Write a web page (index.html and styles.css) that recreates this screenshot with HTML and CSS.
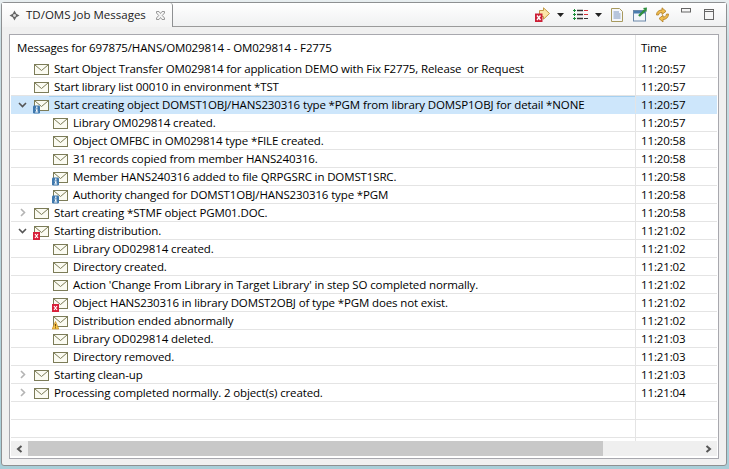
FILE: index.html
```html
<!DOCTYPE html>
<html lang="en">
<head>
<meta charset="utf-8">
<title>TD/OMS Job Messages</title>
<link rel="stylesheet" href="styles.css">
</head>
<body>
<svg class="defs" width="0" height="0" aria-hidden="true">
  <symbol id="env" viewBox="0 0 15 11">
    <rect x="0.5" y="0.5" width="14" height="10" fill="#fbfbf2" stroke="#7c7c58"/>
    <path d="M1 1 L7.5 6.5 L14 1" fill="none" stroke="#7c7c58"/>
  </symbol>
  <symbol id="info" viewBox="0 0 7 9">
    <rect x="0" y="0.5" width="7" height="8" rx="1.2" fill="#3f78ad"/>
    <rect x="3" y="1.5" width="1.5" height="1.3" fill="#fff"/>
    <rect x="2.5" y="3.5" width="2" height="1" fill="#fff"/>
    <rect x="3" y="4.5" width="1.5" height="2" fill="#fff"/>
    <rect x="2.2" y="6.5" width="3" height="1" fill="#fff"/>
  </symbol>
  <symbol id="err" viewBox="0 0 7 9">
    <rect y="1" width="7" height="8" fill="#d8203a"/>
    <path d="M2 3 L5 7 M5 3 L2 7" stroke="#fff" stroke-width="1.2"/>
  </symbol>
  <symbol id="warn" viewBox="0 0 7 9">
    <path d="M3.5 0.5 L6.8 8 H0.2 Z" fill="#f6c84c" stroke="#c98a1c" stroke-width="0.7"/>
    <path d="M3.5 3 V5.5 M3.5 6.3 V7.3" stroke="#7a4a10"/>
  </symbol>
  <symbol id="open" viewBox="0 0 9 6">
    <path d="M1 1 L4.5 4.5 L8 1" fill="none" stroke="#555" stroke-width="1.6"/>
  </symbol>
  <symbol id="closed" viewBox="0 0 6 9">
    <path d="M1 1 L4.5 4.5 L1 8" fill="none" stroke="#b4b4b4" stroke-width="1.6"/>
  </symbol>
</svg>

<main class="window">
  <header class="tabbar">
    <div class="tab">
      <svg class="tab-icon" width="11" height="11" viewBox="0 0 12 12"><path d="M6 0.5 L8 4 L11.5 6 L8 8 L6 11.5 L4 8 L0.5 6 L4 4Z" fill="#666"/><circle cx="6" cy="6" r="1.6" fill="#ddd"/></svg>
      <span class="tab-title">TD/OMS Job Messages</span>
      <svg class="tab-close" width="11" height="11" viewBox="0 0 11 11"><path d="M1.5 1.5 L4 1.5 L5.5 3.5 L7 1.5 L9.5 1.5 L9.5 3 L7.3 5.5 L9.5 8 L9.5 9.5 L7 9.5 L5.5 7.5 L4 9.5 L1.5 9.5 L1.5 8 L3.7 5.5 L1.5 3Z" fill="#f4f4f4" stroke="#8e8e8e" stroke-width="0.9"/></svg>
    </div>
    <div class="toolbar">
      <svg class="tool t-run" width="16" height="16" viewBox="0 0 16 16"><path d="M5.5 3.5 H9.5 V0.8 L15.5 6.5 L9.5 12.2 V9.5 H5.5Z" fill="#fbe5a8" stroke="#c29a45"/><rect x="1" y="6.5" width="7.5" height="8.5" fill="#cc1f36"/><path d="M3 8.5 L6.5 13 M6.5 8.5 L3 13" stroke="#fff" stroke-width="1.3"/></svg>
      <svg class="tool t-arrow" width="7" height="4" viewBox="0 0 7 4"><path d="M0 0H7L3.5 4Z" fill="#222"/></svg>
      <svg class="tool t-list" width="15" height="13" viewBox="0 0 15 13"><path d="M0 2.5H3M1.5 1V4M0 6.5H3M1.5 5V8M0 10.5H3M1.5 9V12" stroke="#1b8e3a"/><path d="M4 2.5H10M4 6.5H10M4 10.5H10" stroke="#333" stroke-width="1.6"/><path d="M11 2.5H15M11 6.5H15" stroke="#d8303a"/><path d="M11 10.5H15" stroke="#333"/></svg>
      <svg class="tool t-arrow2" width="7" height="4" viewBox="0 0 7 4"><path d="M0 0H7L3.5 4Z" fill="#222"/></svg>
      <svg class="tool t-doc" width="12" height="14" viewBox="0 0 12 14"><path d="M0.5 0.5H8.5L11.5 3.5V13.5H0.5Z" fill="#f5f7fb" stroke="#a89a5e"/><path d="M2.5 4H8M2.5 6H9.5M2.5 8H9.5M2.5 10H9.5" stroke="#7a94bc"/></svg>
      <svg class="tool t-export" width="16" height="15" viewBox="0 0 16 15"><rect x="0.5" y="3.5" width="12" height="10.5" fill="#f4f7fb" stroke="#6b87a8"/><rect x="1" y="4" width="11" height="2.5" fill="#4a7db0"/><path d="M6 9 L12 3" stroke="#2f8f3e" stroke-width="2.4"/><path d="M10 1 L14 0.5 L13.5 5Z" fill="#2f8f3e"/></svg>
      <svg class="tool t-sync" width="15" height="16" viewBox="0 0 15 16"><path d="M1.5 8 C1.5 4.5 4 3 7 3 V0.8 L11 4.3 L7 7.5 V5.5 C5 5.5 3.8 6.3 3.5 8Z" fill="#f0bd4f" stroke="#b07c22" stroke-width="0.8"/><path d="M13.5 7 C13.5 10.5 11 12.5 8 12.5 V15 L4 11.5 L8 8.3 V10 C10 10 11.2 9.2 11.5 7Z" fill="#f0bd4f" stroke="#b07c22" stroke-width="0.8"/></svg>
      <svg class="tool t-min" width="10" height="5" viewBox="0 0 10 5"><rect x="0.5" y="0.5" width="9" height="3.5" fill="#f6f6f6" stroke="#666"/></svg>
      <svg class="tool t-max" width="10" height="11" viewBox="0 0 10 11"><rect x="0.5" y="0.5" width="9" height="10" fill="#f6f6f6" stroke="#666"/><path d="M0.5 2.5H9.5" stroke="#666"/></svg>
    </div>
  </header>
  <section class="panel">
    <div class="grid">
      <div class="head">
        <div class="c-msg">Messages for 697875/HANS/OM029814 - OM029814 - F2775</div>
        <div class="c-time">Time</div>
      </div>
      <div class="row l1"><span class="tw"></span><span class="ic"><svg class="env"><use href="#env"/></svg></span><div class="c-msg">Start Object Transfer OM029814 for application DEMO with Fix F2775, Release&nbsp; or Request</div><div class="c-time">11:20:57</div></div>
      <div class="row l1"><span class="tw"></span><span class="ic"><svg class="env"><use href="#env"/></svg></span><div class="c-msg">Start library list 00010 in environment *TST</div><div class="c-time">11:20:57</div></div>
      <div class="row l1 sel"><span class="tw"><svg class="open"><use href="#open"/></svg></span><span class="ic"><svg class="env"><use href="#env"/></svg><svg class="bd"><use href="#info"/></svg></span><div class="c-msg">Start creating object DOMST1OBJ/HANS230316 type *PGM from library DOMSP1OBJ for detail *NONE</div><div class="c-time">11:20:57</div></div>
      <div class="row l2"><span class="ic"><svg class="env"><use href="#env"/></svg></span><div class="c-msg">Library OM029814 created.</div><div class="c-time">11:20:57</div></div>
      <div class="row l2"><span class="ic"><svg class="env"><use href="#env"/></svg></span><div class="c-msg">Object OMFBC in OM029814 type *FILE created.</div><div class="c-time">11:20:58</div></div>
      <div class="row l2"><span class="ic"><svg class="env"><use href="#env"/></svg></span><div class="c-msg">31 records copied from member HANS240316.</div><div class="c-time">11:20:58</div></div>
      <div class="row l2"><span class="ic"><svg class="env"><use href="#env"/></svg><svg class="bd"><use href="#info"/></svg></span><div class="c-msg">Member HANS240316 added to file QRPGSRC in DOMST1SRC.</div><div class="c-time">11:20:58</div></div>
      <div class="row l2"><span class="ic"><svg class="env"><use href="#env"/></svg><svg class="bd"><use href="#info"/></svg></span><div class="c-msg">Authority changed for DOMST1OBJ/HANS230316 type *PGM</div><div class="c-time">11:20:58</div></div>
      <div class="row l1"><span class="tw"><svg class="closed"><use href="#closed"/></svg></span><span class="ic"><svg class="env"><use href="#env"/></svg></span><div class="c-msg">Start creating *STMF object PGM01.DOC.</div><div class="c-time">11:20:58</div></div>
      <div class="row l1"><span class="tw"><svg class="open"><use href="#open"/></svg></span><span class="ic"><svg class="env"><use href="#env"/></svg><svg class="bd"><use href="#err"/></svg></span><div class="c-msg">Starting distribution.</div><div class="c-time">11:21:02</div></div>
      <div class="row l2"><span class="ic"><svg class="env"><use href="#env"/></svg></span><div class="c-msg">Library OD029814 created.</div><div class="c-time">11:21:02</div></div>
      <div class="row l2"><span class="ic"><svg class="env"><use href="#env"/></svg></span><div class="c-msg">Directory created.</div><div class="c-time">11:21:02</div></div>
      <div class="row l2"><span class="ic"><svg class="env"><use href="#env"/></svg></span><div class="c-msg">Action 'Change From Library in Target Library' in step SO completed normally.</div><div class="c-time">11:21:02</div></div>
      <div class="row l2"><span class="ic"><svg class="env"><use href="#env"/></svg><svg class="bd"><use href="#err"/></svg></span><div class="c-msg">Object HANS230316 in library DOMST2OBJ of type *PGM does not exist.</div><div class="c-time">11:21:02</div></div>
      <div class="row l2"><span class="ic"><svg class="env"><use href="#env"/></svg><svg class="bd"><use href="#warn"/></svg></span><div class="c-msg">Distribution ended abnormally</div><div class="c-time">11:21:02</div></div>
      <div class="row l2"><span class="ic"><svg class="env"><use href="#env"/></svg></span><div class="c-msg">Library OD029814 deleted.</div><div class="c-time">11:21:03</div></div>
      <div class="row l2"><span class="ic"><svg class="env"><use href="#env"/></svg></span><div class="c-msg">Directory removed.</div><div class="c-time">11:21:03</div></div>
      <div class="row l1"><span class="tw"><svg class="closed"><use href="#closed"/></svg></span><span class="ic"><svg class="env"><use href="#env"/></svg></span><div class="c-msg">Starting clean-up</div><div class="c-time">11:21:03</div></div>
      <div class="row l1"><span class="tw"><svg class="closed"><use href="#closed"/></svg></span><span class="ic"><svg class="env"><use href="#env"/></svg></span><div class="c-msg">Processing completed normally. 2 object(s) created.</div><div class="c-time">11:21:04</div></div>
      <div class="row"><div class="c-msg"></div><div class="c-time"></div></div>
      <div class="row"><div class="c-msg"></div><div class="c-time"></div></div>
      <div class="tail"><div class="c-msg"></div><div class="c-time"></div></div>
    </div>
    <div class="hscroll">
      <span class="sb-btn"><svg width="7" height="8" viewBox="0 0 7 8"><path d="M5.5 1 L2 4 L5.5 7" fill="none" stroke="#555" stroke-width="2"/></svg></span>
      <span class="sb-track"><span class="sb-thumb"></span></span>
      <span class="sb-btn"><svg width="7" height="8" viewBox="0 0 7 8"><path d="M1.5 1 L5 4 L1.5 7" fill="none" stroke="#555" stroke-width="2"/></svg></span>
    </div>
  </section>
</main>
</body>
</html>
```
FILE: styles.css
```css
* { box-sizing: border-box; }
html, body { margin: 0; height: 100%; }
body {
  width: 729px;
  height: 469px;
  overflow: hidden;
  background: linear-gradient(#e8eef0, #c9dde3 40px, #a8ced8);
  padding: 2px 2px 3px 1px;
  font: 11.5px/16px "Open Sans", "Noto Sans", sans-serif;
  letter-spacing: -0.13px;
  color: #000;
}
.defs { display: block; height: 0; }
.window {
  height: 464px;
  background: #f0f0f0;
  border: 1px solid #8e9092;
  border-radius: 3px;
  display: flex;
  flex-direction: column;
}
.tabbar {
  height: 24px;
  flex: none;
  display: flex;
  background: linear-gradient(#ffffff, #eff0f1);
}
.tab {
  width: 171px;
  height: 24px;
  flex: none;
  display: flex;
  align-items: center;
  padding: 0 0 0 7px;
  background: linear-gradient(#fff, #f3f3f3);
  border-right: 1px solid #8e9092;
  border-radius: 0 3px 0 0;
}
.tab-title { margin-left: 6px; white-space: nowrap; letter-spacing: 0; color: #222; }
.tab-close { margin-left: 9px; }
.toolbar {
  flex: 1;
  display: flex;
  align-items: center;
  padding-left: 361px;
  border-bottom: 1px solid #9a9a9a;
}
.tool { flex: none; display: block; }
.t-arrow { margin-left: 7px; }
.t-list { margin-left: 9px; }
.t-arrow2 { margin-left: 7px; }
.t-doc { margin-left: 9px; }
.t-export { margin-left: 10px; }
.t-sync { margin-left: 6px; }
.t-min { margin: -8px 0 0 11px; }
.t-max { margin: -1px 0 0 13px; }
.panel {
  flex: 1;
  margin: 7px 7px 6px 7px;
  border: 1px solid #a8a8ae;
  background: #fff;
  padding: 0 1px 0 1px;
  display: flex;
  flex-direction: column;
  min-height: 0;
}
.grid { flex: 1; min-height: 0; display: flex; flex-direction: column; }
.head { height: 25px; flex: none; display: flex; }
.tail { flex: 1; display: flex; min-height: 0; }
.row { height: 18px; flex: none; display: flex; border-bottom: 1px solid #e4e4e4; white-space: nowrap; }
.c-msg { flex: 1; min-width: 0; overflow: hidden; padding-left: 5px; line-height: 18px; }
.head .c-msg { padding-left: 6px; line-height: 25px; }
.c-time { width: 82px; flex: none; border-left: 1px solid #e4e4e4; padding-left: 5px; line-height: 18px; }
.head .c-time { line-height: 25px; }
.sel { background: #cde6fb; border-bottom-color: #cde6fb; }
.sel .c-msg { box-shadow: inset 0 1px 0 #a6d0f0; }
.tw { width: 23px; flex: none; display: flex; justify-content: center; align-items: center; }
.ic { position: relative; width: 15px; height: 11px; flex: none; margin-top: 4px; }
.l2 { padding-left: 42px; }
.env { width: 15px; height: 11px; display: block; }
.bd { position: absolute; left: -1px; top: 5px; width: 7px; height: 9px; }
.open { width: 9px; height: 6px; }
.closed { width: 6px; height: 9px; }
.hscroll { height: 15px; flex: none; display: flex; background: #efefef; margin-bottom: 2px; }
.sb-btn { width: 17px; display: flex; align-items: center; justify-content: center; flex: none; }
.sb-track { flex: 1; display: block; }
.sb-thumb { display: block; width: 575px; height: 100%; background: #c8c8c8; }
```
